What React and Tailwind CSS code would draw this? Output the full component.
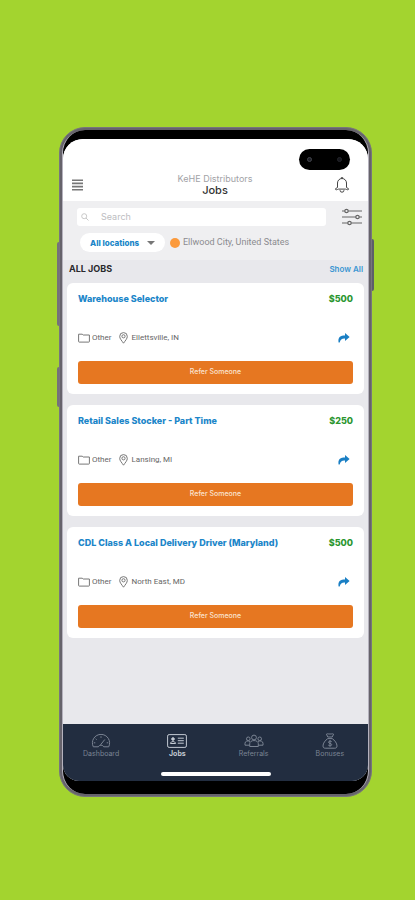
import React from 'react';

const JOBS = [
  { title: 'Warehouse Selector', bonus: '$500', category: 'Other', city: 'Ellettsville, IN' },
  { title: 'Retail Sales Stocker - Part Time', bonus: '$250', category: 'Other', city: 'Lansing, MI' },
  {
    title: 'CDL Class A Local Delivery Driver (Maryland)',
    bonus: '$500',
    category: 'Other',
    city: 'North East, MD',
  },
];

function MenuIcon() {
  return (
    <svg className="w-[11px] h-[12px]" viewBox="0 0 11 12" stroke="#777" strokeWidth="1.6">
      <path d="M0 1.2h11M0 4.4h11M0 7.6h11M0 10.8h11" />
    </svg>
  );
}

function BellIcon() {
  return (
    <svg className="w-[16px] h-[16px]" viewBox="0 0 16 16" fill="none" stroke="#444" strokeWidth="1">
      <path
        d="M3.5 10.5V6a4.5 4.5 0 0 1 9 0v4.5l2 1.2c.3.6-.2 1.1-.8 1.1-1 0-1.500-.7-2.200-.7h-7c-.7 0-1.200.7-2.200.7-.6 0-1.100-.5-.8-1.100z"
        strokeLinejoin="round"
      />
      <path d="M7.3 1.5V.6h1.400v.9M6 13.200a2 2 0 0 0 4 0" />
    </svg>
  );
}

function SearchIcon() {
  return (
    <svg className="w-[8px] h-[8px]" viewBox="0 0 8 8" fill="none" stroke="#c8c8c8" strokeWidth="1">
      <circle cx="3.2" cy="3.2" r="2.5" />
      <path d="M5 5l2.5 2.5" />
    </svg>
  );
}

function FilterIcon() {
  return (
    <svg className="w-[20px] h-[18px]" viewBox="0 0 20 18" fill="#efeff1" stroke="#666" strokeWidth="1.2">
      <path d="M0 3h20M0 9h20M0 15h20" />
      <circle cx="4.5" cy="3" r="1.7" />
      <circle cx="15.5" cy="9" r="1.7" />
      <circle cx="7.5" cy="15" r="1.7" />
    </svg>
  );
}

function FolderIcon() {
  return (
    <svg className="w-[12px] h-[10px]" viewBox="0 0 12 10" fill="none" stroke="#777" strokeWidth="1">
      <path d="M.6 8.5V1.2h3.6l1 .8h6.2v6.5a.6.6 0 0 1-.6.6H1.2a.6.6 0 0 1-.6-.6z" />
    </svg>
  );
}

function PinIcon() {
  return (
    <svg className="w-[9px] h-[12px]" viewBox="0 0 9 12" fill="none" stroke="#777" strokeWidth="1">
      <path d="M4.5 11.2C2.8 8.7.7 6.7.7 4.4a3.8 3.8 0 0 1 7.6 0c0 2.3-2.1 4.3-3.8 6.8z" />
      <circle cx="4.5" cy="4.3" r="1.6" />
    </svg>
  );
}

function ShareIcon() {
  return (
    <svg className="w-[12px] h-[10px]" viewBox="0 0 12 10" fill="#1a7fc4">
      <path d="M7 0l4.6 4L7 8V5.4C4 5.2 2.3 6.3 1.7 9.5H.6C-.2 5 1.5 2.6 7 2.5z" />
    </svg>
  );
}

function DashboardIcon() {
  return (
    <svg className="w-[20px] h-[14px]" viewBox="0 0 20 14" fill="none" stroke="currentColor" strokeWidth="1">
      <path d="M2.3 12.8a8.6 8.6 0 1 1 15.4 0h-5a3 3 0 0 0-5.4 0z" strokeLinejoin="round" />
      <path d="M9.5 10.8l4.3-5.3M10 2.3v1.5M4.6 4.7l1 1M2.8 8.8h1.5M15.7 8.8h1.5" />
    </svg>
  );
}

function JobsIcon() {
  return (
    <svg className="w-[20px] h-[14px]" viewBox="0 0 20 14" fill="none" stroke="currentColor" strokeWidth="1">
      <rect x=".6" y=".6" width="18.8" height="12.8" rx="1.5" />
      <circle cx="6" cy="5" r="1.3" fill="currentColor" />
      <path d="M3.4 9.5c.3-2.6 4.9-2.6 5.2 0zM10.8 4.2h6M10.8 6.7h6M10.8 9.2h6" />
    </svg>
  );
}

function ReferralsIcon() {
  return (
    <svg className="w-[20px] h-[14px]" viewBox="0 0 20 14" fill="none" stroke="currentColor" strokeWidth="1">
      <circle cx="10" cy="3.5" r="2.4" />
      <circle cx="4.3" cy="4.8" r="1.8" />
      <circle cx="15.7" cy="4.8" r="1.8" />
      <path d="M5.7 12.5V9.7c0-4.2 8.6-4.2 8.6 0v2.8z" strokeLinejoin="round" />
      <path d="M5.4 11.2H1V9.3c0-2.2 2.9-3.1 5-1.8M14.6 11.2H19V9.3c0-2.2-2.9-3.1-5-1.8" />
    </svg>
  );
}

function BonusesIcon() {
  return (
    <svg className="w-[16px] h-[16px]" viewBox="0 0 16 16" fill="none" stroke="currentColor" strokeWidth="1">
      <path d="M5.8 4L4.4 1.2c1.2-1 2.4.3 3.6-.3 1.2.6 2.4-.7 3.6.3L10.2 4z" strokeLinejoin="round" />
      <path d="M5.8 5.6C3.2 7.3 1 10.3 1 12.9c0 1.6.8 2.3 2.2 2.3h9.6c1.4 0 2.2-.7 2.2-2.3 0-2.6-2.2-5.6-4.8-7.3z" />
      <path d="M9.7 8.7c-.8-1-3.2-.8-3.2.6s3.2.8 3.2 2.3-2.5 1.6-3.4.5M8 7.2v6.4" />
    </svg>
  );
}

const TABS = [
  { name: 'Dashboard', icon: <DashboardIcon /> },
  { name: 'Jobs', icon: <JobsIcon />, active: true },
  { name: 'Referrals', icon: <ReferralsIcon /> },
  { name: 'Bonuses', icon: <BonusesIcon /> },
];

function Header() {
  return (
    <header className="bg-white pt-[10px] pb-1">
      <div className="flex justify-end pr-[18px]">
        <div className="w-[51px] h-[21px] rounded-full bg-black flex items-center justify-between px-2">
          <span className="w-[5px] h-[5px] rounded-full bg-[#1d1f26] border border-[#44464d]" />
          <span className="w-[5px] h-[5px] rounded-full bg-[#15161c] border border-[#24262c]" />
        </div>
      </div>
      <div className="flex items-center justify-between pl-[9px] pr-[18px] pt-1 pb-px">
        <button type="button" aria-label="Menu" className="w-4">
          <MenuIcon />
        </button>
        <div className="text-center pl-2">
          <p className="text-[9px] leading-[10px] text-[#a2a2a6]">KeHE Distributors</p>
          <h1 className="text-[11px] leading-[12px] font-medium text-[#333]">Jobs</h1>
        </div>
        <button type="button" aria-label="Notifications">
          <BellIcon />
        </button>
      </div>
    </header>
  );
}

function SearchBar() {
  return (
    <div className="bg-[#efeff1] pt-[7px] pb-2">
      <div className="flex items-center gap-4 pl-[14px] pr-[6px]">
        <label className="flex-1 min-w-0 h-[18px] bg-white rounded-[3px] flex items-center gap-3 px-1">
          <SearchIcon />
          <input
            type="text"
            aria-label="Search"
            placeholder="Search"
            className="flex-1 min-w-0 text-[9px] leading-[18px] outline-none placeholder:text-[#bdbdc1]"
          />
        </label>
        <button type="button" aria-label="Filters">
          <FilterIcon />
        </button>
      </div>
      <div className="flex items-center pl-[17px] pt-[7px]">
        <button
          type="button"
          className="h-[19px] w-[85px] rounded-full bg-white flex items-center justify-between px-[10px] text-[8px] font-extrabold text-[#1a86c8]"
        >
          All locations
          <span className="border-x-4 border-t-4 border-x-transparent border-t-[#777]" />
        </button>
        <span className="ml-[5px] w-[10px] h-[10px] rounded-full bg-[#fb9a3c]" />
        <span className="ml-[3px] font-[Roboto,sans-serif] text-[9px] text-[#8b8b8f]">Ellwood City, United States</span>
      </div>
    </div>
  );
}

function JobCard({ title, bonus, category, city }) {
  return (
    <li className="bg-white rounded-[6px] px-[11px] pt-[10px] pb-[10px]">
      <div className="flex justify-between items-center leading-[12px] font-extrabold text-[9px]">
        <h3 className="text-[#1c86c9]">{title}</h3>
        <span className="text-[#2b962f]">{bonus}</span>
      </div>
      <div className="flex items-center mt-[26px] h-[14px] font-[Roboto,sans-serif] text-[8px] text-[#666]">
        <FolderIcon />
        <span className="ml-[2px]">{category}</span>
        <span className="ml-2">
          <PinIcon />
        </span>
        <span className="ml-[3px]">{city}</span>
        <button type="button" aria-label={`Share ${title}`} className="ml-auto mr-[3px]">
          <ShareIcon />
        </button>
      </div>
      <button
        type="button"
        className="mt-4 w-full h-[23px] rounded-[3px] bg-[#e67721] text-[7px] font-medium text-[#fbe3cf] flex items-center justify-center"
      >
        Refer Someone
      </button>
    </li>
  );
}

function TabBar() {
  return (
    <nav className="bg-[#222d40] pt-2 pb-[5px]">
      <div className="grid grid-cols-4">
        {TABS.map((tab) => (
          <a
            key={tab.name}
            href="#"
            className={`flex flex-col items-center text-[7px] leading-[9px] ${
              tab.active ? 'text-[#c3c9d2] font-bold' : 'text-[#7b8493]'
            }`}
          >
            <span className="h-[17px] flex items-center">{tab.icon}</span>
            {tab.name}
          </a>
        ))}
      </div>
      <div className="mx-auto mt-[14px] w-[110px] h-1 rounded-full bg-white" />
    </nav>
  );
}

function App() {
  return (
    <main
      className="min-h-screen bg-[#a3d42f] pt-[127px] pb-[103px] pl-[59px] pr-[43px]"
      style={{ fontFamily: 'Inter, "Liberation Sans", sans-serif' }}
    >
      <div className="relative">
        {/* side keys of the phone */}
        <span className="absolute -left-[2px] top-[115px] w-1 h-[84px] rounded bg-[#75717b]" />
        <span className="absolute -left-[2px] top-[240px] w-1 h-10 rounded bg-[#75717b]" />
        <span className="absolute -right-[2px] top-[112px] w-1 h-[52px] rounded bg-[#5d5f68]" />

        <div className="relative rounded-[26px] bg-[#66636b] border border-[#77757d] p-[2px]">
          <div className="rounded-[23px] bg-black pt-[9px] pb-[13px] border-x border-[#b5b2bd]">
            <div className="bg-[#e8e8ec] rounded-t-[20px] rounded-b-[16px] overflow-hidden">
              <Header />
              <SearchBar />
              <section className="px-1 pb-[86px]">
                <div className="flex justify-between items-center h-[23px] pb-[5px] pl-[2px] pr-px">
                  <h2 className="text-[9px] font-bold text-[#29292c]">ALL JOBS</h2>
                  <a href="#" className="text-[8px] font-semibold text-[#3a96d2]">
                    Show All
                  </a>
                </div>
                <ul className="flex flex-col gap-[11px]">
                  {JOBS.map((job) => (
                    <JobCard key={job.title} {...job} />
                  ))}
                </ul>
              </section>
              <TabBar />
            </div>
          </div>
        </div>
      </div>
    </main>
  );
}

export default App;
